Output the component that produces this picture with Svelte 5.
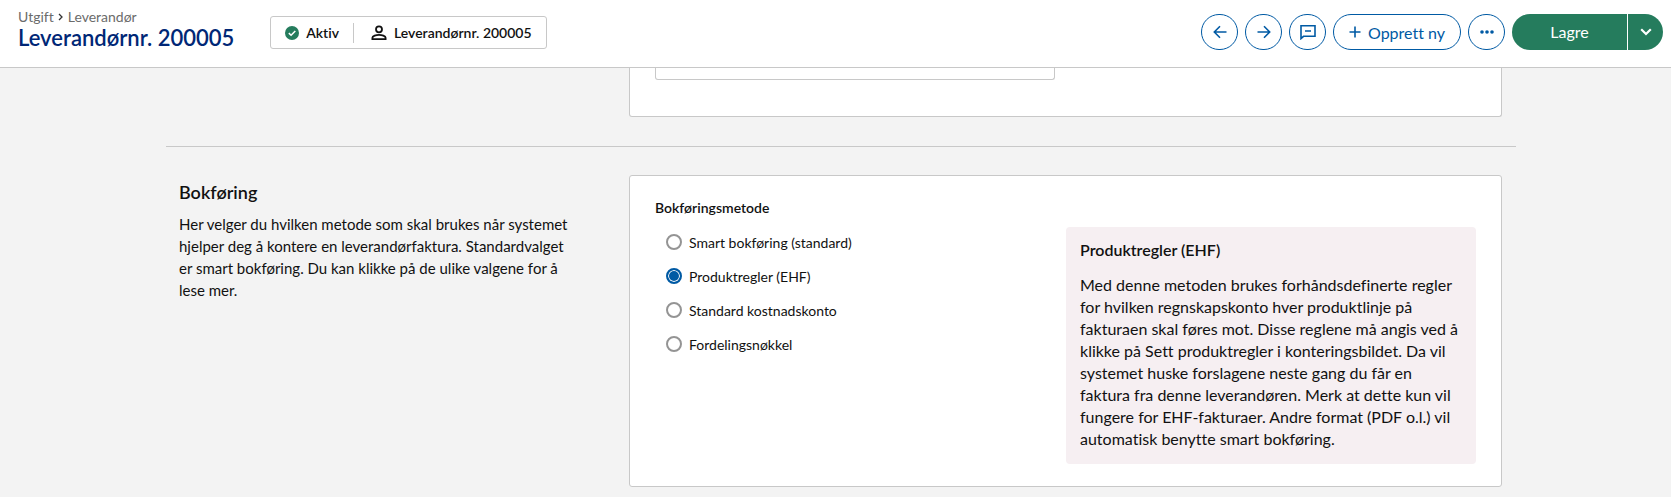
<script>
	const supplierNumber = 'Leverandørnr. 200005';

	const methods = [
		{ id: 'smart', label: 'Smart bokføring (standard)' },
		{
			id: 'product',
			label: 'Produktregler (EHF)',
			help: 'Med denne metoden brukes forhåndsdefinerte regler for hvilken regnskapskonto hver produktlinje på fakturaen skal føres mot. Disse reglene må angis ved å klikke på Sett produktregler i konteringsbildet. Da vil systemet huske forslagene neste gang du får en faktura fra denne leverandøren. Merk at dette kun vil fungere for EHF-fakturaer. Andre format (PDF o.l.) vil automatisk benytte smart bokføring.'
		},
		{ id: 'account', label: 'Standard kostnadskonto' },
		{ id: 'key', label: 'Fordelingsnøkkel' }
	];

	let selected = $state('product');
	let previousField = $state('');
	let current = $derived(methods.find((m) => m.id === selected));
</script>

<header class="topbar">
	<div class="heading">
		<nav class="breadcrumb" aria-label="Brødsmuler">
			<a href="#utgift">Utgift</a>
			<svg width="6" height="8" viewBox="0 0 6 8" aria-hidden="true">
				<path d="M1 1l3 3-3 3" fill="none" stroke="#333" stroke-width="1.3" />
			</svg>
			<a href="#leverandor">Leverandør</a>
		</nav>
		<h1>{supplierNumber}</h1>
	</div>

	<div class="status">
		<span class="status-item">
			<svg width="14" height="14" viewBox="0 0 14 14" aria-hidden="true">
				<circle cx="7" cy="7" r="7" fill="#257c5d" />
				<path d="M3.8 7.1l2.3 2.2 4.2-4.4" fill="none" stroke="#fff" stroke-width="1.5" />
			</svg>
			Aktiv
		</span>
		<span class="status-item">
			<svg width="16" height="16" viewBox="0 0 16 16" aria-hidden="true">
				<g fill="none" stroke="#111" stroke-width="1.8">
					<circle cx="8" cy="4.3" r="3" />
					<path d="M1.4 14.2v-1.4c0-2 3.8-3 6.6-3s6.6 1 6.6 3v1.4z" />
				</g>
			</svg>
			{supplierNumber}
		</span>
	</div>

	<div class="actions">
		<button class="btn round" type="button" aria-label="Forrige">
			<svg width="14" height="14" viewBox="0 0 14 14" aria-hidden="true">
				<path d="M13.5 7H1.5M7 1.3L1.3 7 7 12.7" />
			</svg>
		</button>
		<button class="btn round" type="button" aria-label="Neste">
			<svg width="14" height="14" viewBox="0 0 14 14" aria-hidden="true">
				<path d="M.5 7h12M7 1.3L12.7 7 7 12.7" />
			</svg>
		</button>
		<button class="btn round" type="button" aria-label="Kommentar">
			<svg width="16" height="16" viewBox="0 0 16 16" aria-hidden="true">
				<path d="M1 1.7h14v10.6H3.5L1 14.6zM5 7h6" />
			</svg>
		</button>
		<button class="btn create" type="button">
			<svg width="12" height="12" viewBox="0 0 12 12" aria-hidden="true">
				<path d="M6 .5v11M.5 6h11" />
			</svg>
			Opprett ny
		</button>
		<button class="btn round" type="button" aria-label="Flere valg">
			<svg class="dots" width="14" height="4" viewBox="0 0 14 4" aria-hidden="true">
				<circle cx="2" cy="2" r="1.8" />
				<circle cx="7" cy="2" r="1.8" />
				<circle cx="12" cy="2" r="1.8" />
			</svg>
		</button>
		<div class="split">
			<button class="save" type="button">Lagre</button>
			<button class="save-more" type="button" aria-label="Flere lagringsvalg">
				<svg width="12" height="8" viewBox="0 0 12 8" aria-hidden="true">
					<path d="M1.2 1.2L6 6l4.8-4.8" fill="none" stroke="#fff" stroke-width="2.2" />
				</svg>
			</button>
		</div>
	</div>
</header>

<main>
	<section class="row">
		<div class="card card-cut">
			<input class="field-cut" type="text" aria-label="Felt" bind:value={previousField} />
		</div>
	</section>

	<section class="row">
		<div class="intro">
			<h2>Bokføring</h2>
			<p>
				Her velger du hvilken metode som skal brukes når systemet hjelper deg å kontere en
				leverandørfaktura. Standardvalget er smart bokføring. Du kan klikke på de ulike valgene
				for å lese mer.
			</p>
		</div>

		<div class="card">
			<fieldset>
				<legend>Bokføringsmetode</legend>
				<div class="options">
					<div class="radios">
						{#each methods as method}
							<label>
								<input type="radio" name="method" value={method.id} bind:group={selected} />
								{method.label}
							</label>
						{/each}
					</div>
					{#if current.help}
						<div class="help">
							<h3>{current.label}</h3>
							<p>{current.help}</p>
						</div>
					{/if}
				</div>
			</fieldset>
		</div>
	</section>
</main>

<style>
	:global(body) {
		background: #f3f3f3;
		color: #111;
		font-family: Lato, 'Open Sans', sans-serif;
		font-size: 14px;
		font-variant-ligatures: none;
	}

	h1,
	h2,
	h3,
	p {
		margin: 0;
	}

	button {
		margin: 0;
		padding: 0;
		font: inherit;
		cursor: pointer;
	}

	/* Top bar */
	.topbar {
		display: flex;
		align-items: flex-start;
		padding: 8px 8px 9px 18px;
		border-bottom: 1px solid #c8c8c8;
		background: #fff;
	}

	.heading {
		display: flex;
		flex-direction: column;
		height: 50px;
	}

	.breadcrumb {
		display: flex;
		align-items: center;
		gap: 4px;
		line-height: 18px;
	}

	.breadcrumb a {
		color: #6b6b6b;
		text-decoration: none;
	}

	h1 {
		color: #002776;
		font-size: 22px;
		font-weight: 600;
		line-height: 24px;
	}

	.status {
		display: flex;
		align-items: center;
		box-sizing: border-box;
		height: 33px;
		margin: 8px 0 0 36px;
		border: 1px solid #c8c8c8;
		border-radius: 3px;
		font-weight: 600;
	}

	.status-item {
		display: flex;
		align-items: center;
		gap: 7px;
		height: 20px;
		padding: 0 14px;
	}

	.status-item + .status-item {
		padding-left: 17px;
		border-left: 1px solid #c8c8c8;
	}

	.actions {
		display: flex;
		gap: 7px;
		margin: 6px 0 0 auto;
	}

	.btn {
		display: flex;
		align-items: center;
		justify-content: center;
		box-sizing: border-box;
		height: 36px;
		border: 1px solid #005aa4;
		border-radius: 18px;
		background: #fff;
		color: #005aa4;
		font-size: 16px;
	}

	.btn svg {
		fill: none;
		stroke: currentColor;
		stroke-width: 1.6;
	}

	.btn .dots {
		fill: currentColor;
		stroke: none;
	}

	.round {
		width: 37px;
	}

	.create {
		gap: 7px;
		width: 128px;
	}

	.split {
		display: flex;
		height: 36px;
		gap: 1px;
	}

	.save,
	.save-more {
		display: flex;
		align-items: center;
		justify-content: center;
		border: 0;
		background: #257c5d;
		color: #fff;
		font-size: 16px;
	}

	.save {
		width: 115px;
		padding-bottom: 2px;
		border-radius: 18px 0 0 18px;
	}

	.save-more {
		width: 35px;
		border-radius: 0 18px 18px 0;
	}

	/* Content */
	main {
		max-width: 1350px;
		margin: 0 auto;
		padding-left: 11px;
	}

	.row {
		display: grid;
		grid-template-columns: 450px 1fr;
		padding: 28px 14px 0 13px;
	}

	.row:first-child {
		padding-top: 0;
		padding-bottom: 29px;
		border-bottom: 1px solid #c8c8c8;
	}

	.card {
		grid-column: 2;
		padding: 22px 25px;
		border: 1px solid #c8c8c8;
		border-radius: 3px;
		background: #fff;
	}

	.card-cut {
		padding: 0 25px 36px;
		border-top: 0;
		border-radius: 0 0 3px 3px;
	}

	.field-cut {
		display: block;
		box-sizing: border-box;
		width: 400px;
		height: 12px;
		padding: 0 8px;
		border: 1px solid #c8c8c8;
		border-top: 0;
		border-radius: 0 0 3px 3px;
	}

	.intro {
		padding: 7px 50px 0 0;
		font-size: 15px;
	}

	h2 {
		margin-bottom: 11px;
		font-size: 18px;
		font-weight: 600;
		line-height: 20px;
	}

	.intro p,
	.help p {
		line-height: 22px;
	}

	fieldset {
		min-width: 0;
		margin: 0;
		padding: 0;
		border: 0;
	}

	legend {
		padding: 0;
		font-weight: 600;
		line-height: 20px;
	}

	.options {
		display: grid;
		grid-template-columns: 1fr 410px;
		padding-top: 9px;
	}

	.radios {
		display: flex;
		flex-direction: column;
		align-items: flex-start;
		gap: 14px;
		padding: 5px 0 0 11px;
	}

	label {
		display: flex;
		align-items: center;
		gap: 7px;
		height: 20px;
	}

	input[type='radio'] {
		appearance: none;
		box-sizing: border-box;
		width: 16px;
		height: 16px;
		margin: 0;
		border: 2px solid #949494;
		border-radius: 50%;
		background: #fff;
	}

	input[type='radio']:checked {
		border-color: #005aa4;
		background: #005aa4;
		box-shadow: inset 0 0 0 1px #fff;
	}

	.help {
		padding: 13px 14px 14px;
		border-radius: 4px;
		background: #f6eff2;
		font-size: 16px;
	}

	h3 {
		margin-bottom: 14px;
		font-size: 16px;
		font-weight: 600;
		line-height: 20px;
	}
</style>
